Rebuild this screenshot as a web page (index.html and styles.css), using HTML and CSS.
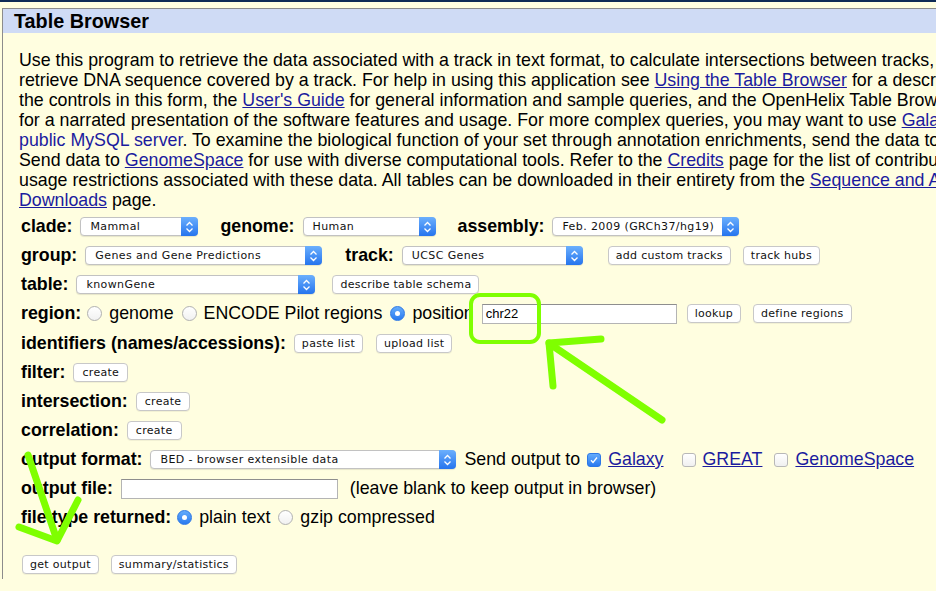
FILE: index.html
```html
<!DOCTYPE html>
<html>
<head>
<meta charset="utf-8">
<title>Table Browser</title>
<link rel="stylesheet" href="styles.css">
</head>
<body>
<div class="topbar"></div>
<div class="frame">
  <div class="hdr">Table Browser</div>
  <div class="content">
    <p class="intro">Use this program to retrieve the data associated with a track in text format, to calculate intersections between tracks, and to<br>retrieve DNA sequence covered by a track. For help in using this application see <a href="#">Using the Table Browser</a> for a description of<br>the controls in this form, the <a href="#">User's Guide</a> for general information and sample queries, and the OpenHelix Table Browser <a href="#">tutorial</a><br>for a narrated presentation of the software features and usage. For more complex queries, you may want to use <a href="#">Galaxy</a> or our<br><a href="#" class="plain">public MySQL server</a>. To examine the biological function of your set through annotation enrichments, send the data to <a href="#">GREAT</a>.<br>Send data to <a href="#">GenomeSpace</a> for use with diverse computational tools. Refer to the <a href="#">Credits</a> page for the list of contributors and<br>usage restrictions associated with these data. All tables can be downloaded in their entirety from the <a href="#">Sequence and Annotation</a><br><a href="#">Downloads</a> page.</p>

    <div class="rows">
      <div class="row">
        <span class="lbl">clade:</span>
        <span class="sel w-clade"><span class="val">Mammal</span><span class="arr"><svg width="9" height="12" viewBox="0 0 9 12"><path d="M1.5 4.5 L4.5 1.5 L7.5 4.5 M1.5 7.5 L4.5 10.5 L7.5 7.5" fill="none" stroke="#fff" stroke-width="1.3"/></svg></span></span>
        <span class="lbl sp22">genome:</span>
        <span class="sel w-genome"><span class="val">Human</span><span class="arr"><svg width="9" height="12" viewBox="0 0 9 12"><path d="M1.5 4.5 L4.5 1.5 L7.5 4.5 M1.5 7.5 L4.5 10.5 L7.5 7.5" fill="none" stroke="#fff" stroke-width="1.3"/></svg></span></span>
        <span class="lbl sp22">assembly:</span>
        <span class="sel w-assembly"><span class="val">Feb. 2009 (GRCh37/hg19)</span><span class="arr"><svg width="9" height="12" viewBox="0 0 9 12"><path d="M1.5 4.5 L4.5 1.5 L7.5 4.5 M1.5 7.5 L4.5 10.5 L7.5 7.5" fill="none" stroke="#fff" stroke-width="1.3"/></svg></span></span>
      </div>

      <div class="row">
        <span class="lbl">group:</span>
        <span class="sel w-group"><span class="val">Genes and Gene Predictions</span><span class="arr"><svg width="9" height="12" viewBox="0 0 9 12"><path d="M1.5 4.5 L4.5 1.5 L7.5 4.5 M1.5 7.5 L4.5 10.5 L7.5 7.5" fill="none" stroke="#fff" stroke-width="1.3"/></svg></span></span>
        <span class="lbl sp23">track:</span>
        <span class="sel w-track"><span class="val">UCSC Genes</span><span class="arr"><svg width="9" height="12" viewBox="0 0 9 12"><path d="M1.5 4.5 L4.5 1.5 L7.5 4.5 M1.5 7.5 L4.5 10.5 L7.5 7.5" fill="none" stroke="#fff" stroke-width="1.3"/></svg></span></span>
        <button class="btn sp25">add custom tracks</button>
        <button class="btn sp12">track hubs</button>
      </div>

      <div class="row">
        <span class="lbl">table:</span>
        <span class="sel w-table"><span class="val">knownGene</span><span class="arr"><svg width="9" height="12" viewBox="0 0 9 12"><path d="M1.5 4.5 L4.5 1.5 L7.5 4.5 M1.5 7.5 L4.5 10.5 L7.5 7.5" fill="none" stroke="#fff" stroke-width="1.3"/></svg></span></span>
        <button class="btn sp17">describe table schema</button>
      </div>

      <div class="row">
        <span class="lbl lbl-tight">region:</span>
        <span class="radio"></span><span class="opt">genome</span>
        <span class="radio"></span><span class="opt">ENCODE Pilot regions</span>
        <span class="radio on"></span><span class="opt">position</span>
        <span class="txt w-pos sp8">chr22</span>
        <button class="btn sp10">lookup</button>
        <button class="btn sp12">define regions</button>
      </div>

      <div class="row row-gap">
        <span class="lbl">identifiers (names/accessions):</span>
        <button class="btn">paste list</button>
        <button class="btn sp13">upload list</button>
      </div>

      <div class="row">
        <span class="lbl">filter:</span>
        <button class="btn btn-c">create</button>
      </div>

      <div class="row">
        <span class="lbl">intersection:</span>
        <button class="btn btn-c">create</button>
      </div>

      <div class="row">
        <span class="lbl">correlation:</span>
        <button class="btn btn-c">create</button>
      </div>

      <div class="row">
        <span class="lbl">output format:</span>
        <span class="sel w-format"><span class="val">BED - browser extensible data</span><span class="arr"><svg width="9" height="12" viewBox="0 0 9 12"><path d="M1.5 4.5 L4.5 1.5 L7.5 4.5 M1.5 7.5 L4.5 10.5 L7.5 7.5" fill="none" stroke="#fff" stroke-width="1.3"/></svg></span></span>
        <span class="plain-t sp8">Send output to</span>
        <span class="cb on sp7"><svg width="14" height="14" viewBox="0 0 14 14"><path d="M4 7.3 L6 9.5 L10 4.5" fill="none" stroke="#fff" stroke-width="1.3"/></svg></span><a href="#" class="opt-link">Galaxy</a>
        <span class="cb sp18"></span><a href="#" class="opt-link">GREAT</a>
        <span class="cb sp12"></span><a href="#" class="opt-link">GenomeSpace</a>
      </div>

      <div class="row">
        <span class="lbl">output file:</span>
        <span class="txt w-file"></span>
        <span class="plain-t sp12">(leave blank to keep output in browser)</span>
      </div>

      <div class="row">
        <span class="lbl lbl-tight">file type returned:</span>
        <span class="radio on"></span><span class="opt">plain text</span>
        <span class="radio"></span><span class="opt">gzip compressed</span>
      </div>

      <div class="row row-submit">
        <button class="btn">get output</button>
        <button class="btn sp12">summary/statistics</button>
      </div>
    </div>
  </div>
</div>

<svg class="annot" width="936" height="591" viewBox="0 0 936 591">
  <rect x="471" y="295" width="68" height="47" rx="9" ry="9" fill="none" stroke="#7fff00" stroke-width="4"/>
  <g stroke="#7fff00" stroke-width="7" stroke-linecap="round" stroke-linejoin="round" fill="none">
    <path d="M550 344 L662 420"/>
    <path d="M549 343 L553 386"/>
    <path d="M549 343 L601 339"/>
    <path d="M28 455 L57 540"/>
    <path d="M19 527 L57 541 L78 500"/>
  </g>
</svg>
</body>
</html>
```

FILE: styles.css
```css
html, body {
  margin: 0;
  padding: 0;
}

body {
  width: 936px;
  height: 591px;
  overflow: hidden;
  position: relative;
  background: #fffee0;
  color: #000;
  font-family: "Liberation Sans", Arial, Helvetica, sans-serif;
}

.topbar {
  height: 2px;
  background: #0e2a55;
}

.frame {
  margin: 6px 0 0 2px;
  width: 1400px;
  border-left: 1px solid #8c8c8c;
  border-top: 1px solid #8c8c8c;
}

.hdr {
  height: 24px;
  background: #cfdbf5;
  font-weight: bold;
  font-size: 19.8px;
  line-height: 25px;
  padding-left: 11px;
}

.content {
  padding: 17px 0 0 16px;
}

.intro {
  margin: 0;
  font-size: 17.8px;
  line-height: 20px;
  white-space: nowrap;
}

a {
  color: #1b1b9e;
  text-decoration: underline;
}

a.plain {
  text-decoration: none;
}

.rows {
  margin-top: 2px;
}

.row {
  display: flex;
  align-items: center;
  height: 29px;
  margin-left: 2px;
  white-space: nowrap;
  font-size: 17.8px;
}

.row-gap {
  margin-top: 1px;
}

.row-submit {
  margin-top: 18px;
  margin-left: 3px;
}

.lbl {
  font-weight: bold;
  margin-right: 8px;
}

.lbl-tight {
  margin-right: 6px;
}

/* Mac-style popup select */
.sel {
  box-sizing: border-box;
  display: inline-flex;
  align-items: center;
  justify-content: space-between;
  height: 19px;
  padding-left: 9px;
  background: #fff;
  border: 1px solid #c2c2c2;
  border-radius: 4px;
  box-shadow: 0 1px 1px rgba(0, 0, 0, 0.10);
  font-family: "DejaVu Sans", "Liberation Sans", sans-serif;
  font-size: 11px;
  letter-spacing: 0.4px;
  color: #111;
}

.sel .arr {
  box-sizing: border-box;
  width: 17px;
  height: 19px;
  margin: -1px -1px -1px 0;
  border-radius: 0 4px 4px 0;
  background: linear-gradient(#6cb0fd, #2574ee);
  display: flex;
  align-items: center;
  justify-content: center;
}

.w-clade { width: 118px; }
.w-genome { width: 133px; }
.w-assembly { width: 187px; }
.w-group { width: 237px; }
.w-track { width: 181px; }
.w-table { width: 239px; }
.w-format { width: 306px; }

/* buttons */
.btn {
  box-sizing: border-box;
  height: 19px;
  padding: 0 7px;
  margin: 0;
  background: #fff;
  border: 1px solid #c8c8c8;
  border-radius: 4px;
  box-shadow: 0 1px 0 rgba(0, 0, 0, 0.05);
  font-family: "DejaVu Sans", "Liberation Sans", sans-serif;
  font-size: 11px;
  letter-spacing: 0.3px;
  color: #111;
  line-height: 17px;
}

.btn-c {
  padding: 0 8px;
}

/* text fields */
.txt {
  box-sizing: border-box;
  display: inline-block;
  height: 20px;
  padding-left: 3px;
  background: #fff;
  border: 1px solid #b4b4b4;
  border-top-color: #8e8e8e;
  font-size: 13px;
  line-height: 18px;
  color: #000;
}

.w-pos { width: 195px; }
.w-file { width: 217px; }

/* radios and checkboxes */
.radio {
  box-sizing: border-box;
  display: inline-block;
  width: 15px;
  height: 15px;
  margin: 0 7px 0 0;
  border-radius: 50%;
  border: 1px solid #b1b1b1;
  background: linear-gradient(#ffffff, #f1f1f1);
  position: relative;
}

.opt + .radio {
  margin-left: 8px;
}

.radio.on {
  border-color: #2d78e6;
  background: linear-gradient(#64acfb, #2a7af0);
}

.radio.on::after {
  content: "";
  position: absolute;
  left: 4px;
  top: 4px;
  width: 5px;
  height: 5px;
  border-radius: 50%;
  background: #fff;
}

.cb {
  box-sizing: border-box;
  display: inline-flex;
  width: 14px;
  height: 14px;
  margin-right: 7px;
  border-radius: 3px;
  border: 1px solid #b8b8b8;
  background: linear-gradient(#ffffff, #f0f0f0);
}

.cb.on {
  border-color: #2d78e6;
  background: linear-gradient(#64acfb, #2a7af0);
}

.cb.on svg {
  margin: -1px;
}

.annot {
  position: absolute;
  left: 0;
  top: 0;
  pointer-events: none;
}

/* spacing helpers (kept last so they win over component margins) */
.sp7 { margin-left: 7px; }
.sp8 { margin-left: 8px; }
.sp10 { margin-left: 10px; }
.sp12 { margin-left: 12px; }
.sp13 { margin-left: 13px; }
.sp17 { margin-left: 17px; }
.sp18 { margin-left: 18px; }
.sp22 { margin-left: 22px; }
.sp23 { margin-left: 23px; }
.sp25 { margin-left: 25px; }
```
